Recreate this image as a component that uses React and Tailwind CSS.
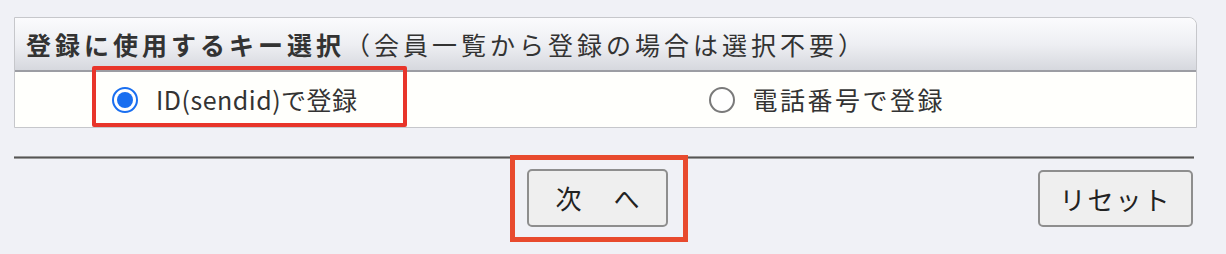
import React from 'react';

function Radio({ checked }) {
    return checked ? (
        <span className="flex h-[26px] w-[26px] shrink-0 items-center justify-center rounded-full border-[2px] border-[#1a6ff0] bg-white">
            <span className="h-[16px] w-[16px] rounded-full bg-[#1a6ff0]" />
        </span>
    ) : (
        <span className="h-[26px] w-[26px] shrink-0 rounded-full border-[2px] border-[#7a7a7a] bg-white" />
    );
}

export default function App() {
    return (
        <div className="min-h-[254px] w-[1226px] bg-[#f0f1f6] pl-[14px] pr-[29px] pt-[17px] text-[#333] font-['Noto_Sans_CJK_JP','Noto_Sans',sans-serif]">
            {/* 選択テーブル */}
            <div className="border border-[#c6c7cb] rounded-tr-[8px] bg-[#fffffc]">
                <div className="flex h-[54px] items-center rounded-tr-[8px] border-b-[2px] border-[#9c9da3] bg-gradient-to-b from-[#fbfbfd] via-[#eeeff3] to-[#d6d8de] pl-[11px] text-[25px] tracking-[4px] leading-none">
                    <span className="font-bold">登録に使用するキー選択</span>
                    <span>（会員一覧から登録の場合は選択不要）</span>
                </div>
                <div className="grid h-[55px] grid-cols-2 items-center text-[25px] leading-none">
                    <div className="pl-[97px]">
                        <label className="relative flex w-fit items-center gap-[18px] tracking-[0.5px]">
                            <Radio checked />
                            <span>ID(sendid)で登録</span>
                            <span className="pointer-events-none absolute left-[-20px] right-[-49px] top-[-21px] bottom-[-14px] rounded-[2px] border-[4px] border-[#e8352a]" />
                        </label>
                    </div>
                    <div className="pl-[103px]">
                        <label className="flex w-fit items-center gap-[18px] tracking-[2.5px]">
                            <Radio />
                            <span>電話番号で登録</span>
                        </label>
                    </div>
                </div>
            </div>

            {/* 区切り線 */}
            <div className="mt-[28px] mr-[3px] h-[3px] border-y border-[#9a9a9a] bg-[#555]" />

            {/* ボタン */}
            <div className="relative mt-[9px] flex h-[60px] items-start">
                <div className="absolute left-[513px] top-[1px]">
                    <div className="relative">
                        <button className="flex h-[58px] w-[141px] items-center justify-center gap-[32px] rounded-[5px] border-[2px] border-[#8e8e8e] bg-[#efefef] text-[26px] leading-none text-[#222]">
                            <span>次</span>
                            <span>へ</span>
                        </button>
                        <span className="pointer-events-none absolute left-[-17px] right-[-20px] top-[-14px] bottom-[-15px] border-[5px] border-[#e84a2e]" />
                    </div>
                </div>
                <button className="ml-auto mr-[4px] mt-[2px] flex h-[57px] w-[155px] items-center justify-center rounded-[5px] border-[2px] border-[#8e8e8e] bg-[#efefef] text-[26px] tracking-[2px] leading-none text-[#222]">
                    リセット
                </button>
            </div>
        </div>
    );
}
